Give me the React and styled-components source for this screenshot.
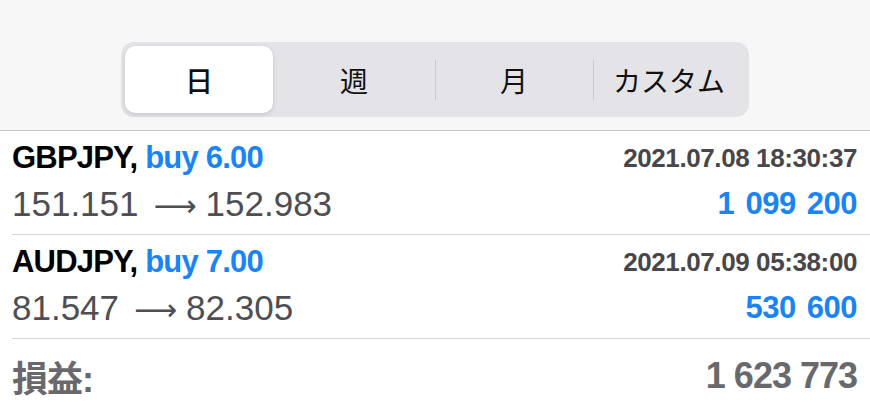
import React from "react";
import styled, { createGlobalStyle } from "styled-components";

const GlobalStyle = createGlobalStyle`
  html, body {
    margin: 0;
    padding: 0;
    background: #ffffff;
  }
  body {
    font-family: "Liberation Sans", "Noto Sans CJK JP", sans-serif;
  }
`;

const Page = styled.div`
  width: 870px;
  height: 406px;
  overflow: hidden;
  background: #ffffff;
`;

const Header = styled.div`
  height: 131px;
  background: #f7f7f7;
  border-bottom: 1px solid #c6c6c9;
  display: flex;
  align-items: flex-start;
  justify-content: center;
  padding-top: 42px;
  box-sizing: border-box;
`;

const Segmented = styled.div`
  width: 628px;
  height: 75px;
  box-sizing: border-box;
  padding: 4px;
  border-radius: 13px;
  background: #e4e4e8;
  display: flex;
  align-items: stretch;
`;

const Segment = styled.div`
  flex: ${(p) => (p.$width ? `0 0 ${p.$width}px` : "1")};
  display: flex;
  align-items: center;
  justify-content: center;
  position: relative;
  font-family: "Noto Sans CJK JP", sans-serif;
  font-size: 28px;
  font-weight: ${(p) => (p.$active ? 500 : 400)};
  color: #111111;
  border-radius: 10px;
  background: ${(p) => (p.$active ? "#ffffff" : "transparent")};
  box-shadow: ${(p) =>
    p.$active ? "0 2px 5px rgba(0,0,0,0.12), 0 0 1px rgba(0,0,0,0.08)" : "none"};

  &::before {
    content: "";
    display: ${(p) => (p.$divider ? "block" : "none")};
    position: absolute;
    left: 0;
    top: 14px;
    bottom: 13px;
    width: 1px;
    background: #c9c9ce;
  }
`;

const Row = styled.div`
  margin-left: 12px;
  padding: 4px 13px 7px 0;
  border-bottom: 1px solid #d4d4d7;
`;

const Line = styled.div`
  height: 46px;
  display: flex;
  align-items: center;
  justify-content: space-between;
  white-space: nowrap;
`;

const Symbol = styled.span`
  font-size: 31px;
  font-weight: 700;
  letter-spacing: -0.8px;
  color: #000000;
`;

const Side = styled.span`
  color: #1a84f4;
`;

const Time = styled.span`
  font-size: 26px;
  font-weight: 700;
  letter-spacing: -0.4px;
  color: #47474b;
`;

const Prices = styled.span`
  font-size: 35px;
  font-weight: 400;
  color: #4e4e53;
`;

const Arrow = styled.span`
  font-family: "DejaVu Sans", sans-serif;
  font-size: 30px;
  margin: 0 9px 0 15px;
`;

const Profit = styled.span`
  font-size: 31px;
  font-weight: 700;
  letter-spacing: -0.5px;
  word-spacing: 3px;
  color: #1a84f4;
`;

const Footer = styled.div`
  padding: 14px 13px 0 12px;
`;

const Total = styled.span`
  font-size: 36px;
  font-weight: 700;
  letter-spacing: -1px;
  color: #69696d;
`;

const deals = [
  {
    symbol: "GBPJPY,",
    side: "buy 6.00",
    time: "2021.07.08 18:30:37",
    open: "151.151",
    close: "152.983",
    profit: "1 099 200",
  },
  {
    symbol: "AUDJPY,",
    side: "buy 7.00",
    time: "2021.07.09 05:38:00",
    open: "81.547",
    close: "82.305",
    profit: "530 600",
  },
];

const periods = [
  { label: "日", width: 148 },
  { label: "週", width: 162 },
  { label: "月", width: 158 },
  { label: "カスタム" },
];

export default function App() {
  return (
    <Page>
      <GlobalStyle />
      <Header>
        <Segmented>
          {periods.map((p, i) => (
            <Segment
              key={p.label}
              $width={p.width}
              $active={i === 0}
              $divider={i > 1}
            >
              {p.label}
            </Segment>
          ))}
        </Segmented>
      </Header>
      {deals.map((d) => (
        <Row key={d.symbol}>
          <Line>
            <Symbol>
              {d.symbol} <Side>{d.side}</Side>
            </Symbol>
            <Time>{d.time}</Time>
          </Line>
          <Line>
            <Prices>
              {d.open}
              <Arrow>⟶</Arrow>
              {d.close}
            </Prices>
            <Profit>{d.profit}</Profit>
          </Line>
        </Row>
      ))}
      <Footer>
        <Line>
          <Total>損益:</Total>
          <Total>1 623 773</Total>
        </Line>
      </Footer>
    </Page>
  );
}
